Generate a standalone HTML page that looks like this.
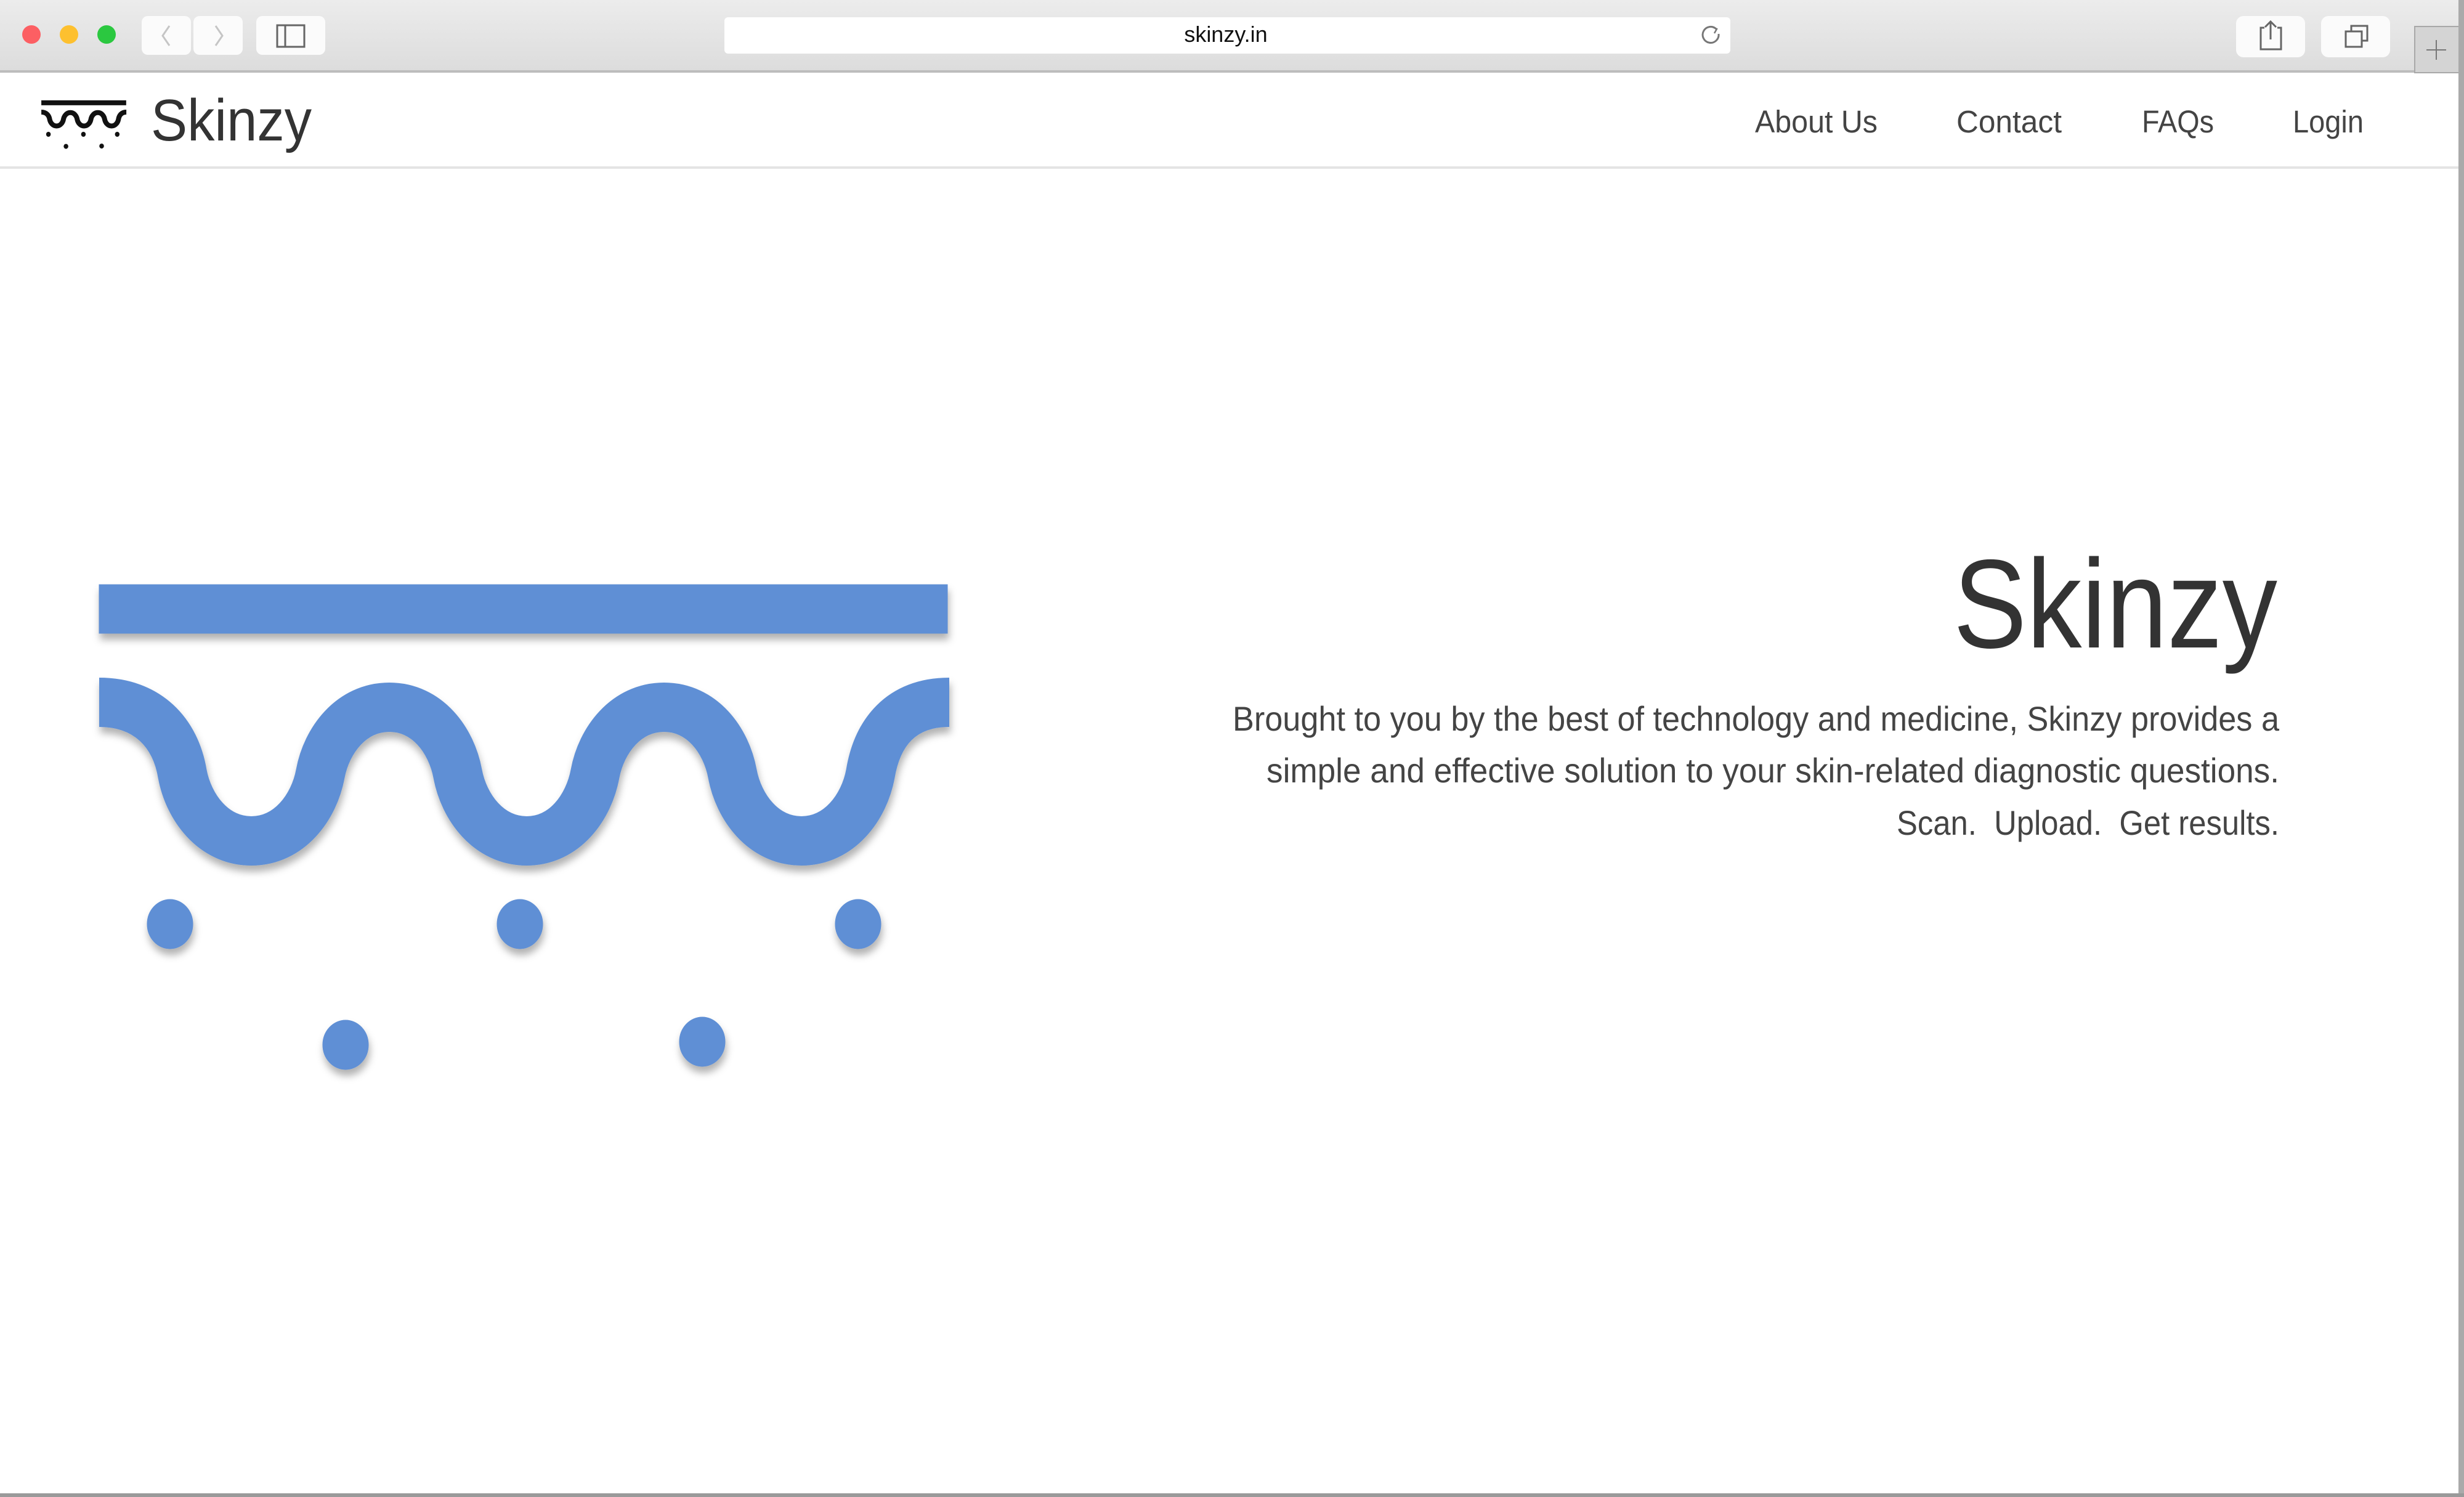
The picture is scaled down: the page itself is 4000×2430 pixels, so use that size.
<!DOCTYPE html>
<html><head><meta charset="utf-8"><style>
html,body{margin:0;padding:0;width:4000px;height:2430px;overflow:hidden;background:#fff}
svg{display:block}
</style></head><body>
<svg width="4000" height="2430" viewBox="0 0 4000 2430" xmlns="http://www.w3.org/2000/svg">
<defs>
<linearGradient id="chrome" x1="0" y1="0" x2="0" y2="1"><stop offset="0" stop-color="#ececec"/><stop offset="1" stop-color="#dcdcdc"/></linearGradient>
<filter id="sh" x="-5%" y="-5%" width="110%" height="120%"><feDropShadow dx="2" dy="10" stdDeviation="6" flood-color="#000" flood-opacity="0.3"/></filter>
<g id="logo">
<rect x="161" y="949" width="1377" height="79"/>
<path d="M161,1140 C240,1140 285,1190 296,1256 C306,1310 346,1365 408,1365
C470,1365 510,1310 520,1256 C530,1202 570,1148 632,1148
C694,1148 733,1202 743,1256 C753,1310 793,1365 855,1365
C917,1365 956,1310 966,1256 C976,1202 1016,1148 1078,1148
C1140,1148 1179,1202 1189,1256 C1199,1310 1239,1365 1301,1365
C1363,1365 1403,1310 1413,1256 C1424,1190 1462,1140 1541,1140" fill="none" stroke-width="80" stroke="inherit"/>
<ellipse cx="276" cy="1500" rx="37" ry="40"/>
<ellipse cx="844" cy="1500" rx="37" ry="40"/>
<ellipse cx="1393" cy="1500" rx="37" ry="40"/>
<ellipse cx="561" cy="1696" rx="37" ry="40"/>
<ellipse cx="1140" cy="1691" rx="37" ry="40"/>
</g>
</defs>
<rect x="0" y="0" width="4000" height="116" fill="url(#chrome)"/>
<rect x="0" y="114" width="4000" height="4" fill="#bdbdbd"/>
<circle cx="51" cy="56" r="15" fill="#fc5f63"/>
<circle cx="112" cy="56" r="15" fill="#fdc02f"/>
<circle cx="173" cy="56" r="15" fill="#2bc840"/>
<rect x="230" y="26" width="80" height="63" rx="10" fill="#fbfbfb"/>
<rect x="314" y="26" width="80" height="63" rx="10" fill="#fbfbfb"/>
<path d="M275,42 L264,58 L275,74" fill="none" stroke="#c5c5c5" stroke-width="3"/>
<path d="M350,42 L361,58 L350,74" fill="none" stroke="#c5c5c5" stroke-width="3"/>
<rect x="416" y="26" width="112" height="63" rx="10" fill="#fbfbfb"/>
<rect x="450" y="41" width="44" height="35" fill="none" stroke="#666" stroke-width="3"/>
<line x1="463" y1="41" x2="463" y2="76" stroke="#666" stroke-width="3"/>
<rect x="1176" y="28" width="1633" height="59" rx="6" fill="#fff"/>
<text x="1990" y="68" font-family="Liberation Sans, sans-serif" font-size="36" fill="#111" text-anchor="middle">skinzy.in</text>
<path d="M2786,47 A13,13 0 1,0 2790,55" fill="none" stroke="#777" stroke-width="3"/>
<path d="M2780,44 L2787,47 L2783,54" fill="none" stroke="#777" stroke-width="2.5"/>
<rect x="3630" y="26" width="112" height="67" rx="12" fill="#fbfbfb"/>
<path d="M3676,45 L3670,45 L3670,80 L3703,80 L3703,45 L3697,45" fill="none" stroke="#666" stroke-width="3"/>
<path d="M3686,64 L3686,35 M3677,44 L3686,35 L3695,44" fill="none" stroke="#666" stroke-width="3"/>
<rect x="3768" y="26" width="112" height="67" rx="12" fill="#fbfbfb"/>
<rect x="3808" y="51" width="26" height="25" fill="none" stroke="#666" stroke-width="3"/>
<path d="M3817,51 L3817,42 L3843,42 L3843,66 L3834,66" fill="none" stroke="#666" stroke-width="3"/>
<rect x="3920" y="43" width="72" height="75" fill="#d4d4d4" stroke="#a8a8a8" stroke-width="2"/>
<path d="M3955,65 L3955,97 M3939,81 L3971,81" stroke="#777" stroke-width="2"/>
<rect x="3991" y="0" width="9" height="2430" fill="#aaa"/>
<rect x="0" y="2424" width="4000" height="6" fill="#9a9a9a"/>
<rect x="0" y="270" width="3991" height="4" fill="#e4e4e4"/>
<g transform="translate(51,68) scale(0.1)" fill="#111" stroke="#111"><use href="#logo"/></g>
<text x="245" y="228" font-family="Liberation Sans, sans-serif" font-size="96" fill="#333" textLength="261" lengthAdjust="spacingAndGlyphs">Skinzy</text>
<g font-family="Liberation Sans, sans-serif" font-size="51" fill="#444">
<text x="2849" y="215" textLength="199" lengthAdjust="spacingAndGlyphs">About Us</text>
<text x="3176" y="215" textLength="171" lengthAdjust="spacingAndGlyphs">Contact</text>
<text x="3477" y="215" textLength="117" lengthAdjust="spacingAndGlyphs">FAQs</text>
<text x="3722" y="215" textLength="115" lengthAdjust="spacingAndGlyphs">Login</text>
</g>
<g fill="#5f8fd5" stroke="#5f8fd5" filter="url(#sh)"><use href="#logo"/></g>
<text x="3697" y="1051" font-family="Liberation Sans, sans-serif" font-size="205" fill="#333" text-anchor="end" textLength="526" lengthAdjust="spacingAndGlyphs">Skinzy</text>
<g font-family="Liberation Sans, sans-serif" font-size="56" fill="#444" text-anchor="end">
<text x="3700" y="1186" textLength="1699" lengthAdjust="spacingAndGlyphs">Brought to you by the best of technology and medicine, Skinzy provides a</text>
<text x="3700" y="1270" textLength="1644" lengthAdjust="spacingAndGlyphs">simple and effective solution to your skin-related diagnostic questions.</text>
<text x="3700" y="1355" textLength="621" lengthAdjust="spacingAndGlyphs">Scan.&#160; Upload.&#160; Get results.</text>
</g>
</svg>
</body></html>
